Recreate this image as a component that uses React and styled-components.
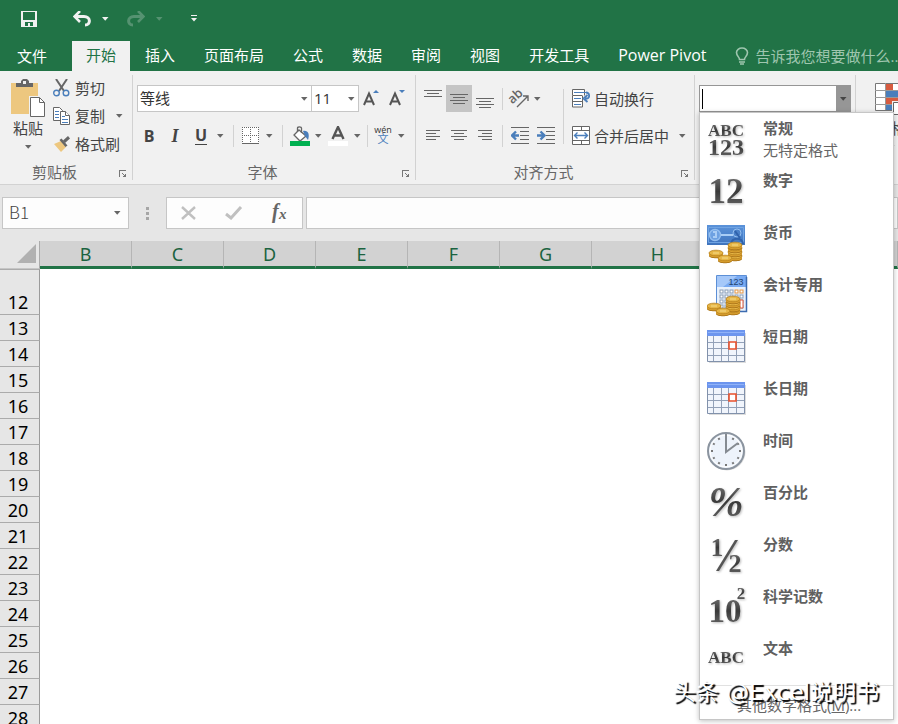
import React, { useState } from 'react';
import styled, { createGlobalStyle, css } from 'styled-components';

const GlobalStyle = createGlobalStyle`
    *, *::before, *::after {
        box-sizing: border-box;
    }
    body {
        margin: 0;
        font-family: "Open Sans", "Noto Sans CJK SC", sans-serif;
        font-size: 15px;
        line-height: 22px;
        color: #444;
        background: #fff;
    }
    button, input, select {
        font: inherit;
        color: inherit;
        margin: 0;
        padding: 0;
        border: 0;
        border-radius: 0;
        background: transparent;
        outline: none;
    }
    svg {
        display: block;
        flex: none;
    }
`;

const Window = styled.div`
    position: relative;
    display: flex;
    flex-direction: column;
    height: 100vh;
    overflow: hidden;
`;

const TitleBar = styled.header`
    display: flex;
    flex: none;
    align-items: center;
    height: 41px;
    padding: 0 16px 3px;
    background: #217346;
    color: #f1f1f1;
`;

const QuickButton = styled.button`
    display: flex;
    align-items: center;
    justify-content: center;
    width: ${props => props.$width || 26}px;
    height: 26px;
    margin-left: ${props => props.$gap || 0}px;
    opacity: ${props => props.disabled ? 0.25 : 1};
`;

const TabStrip = styled.nav`
    display: flex;
    flex: none;
    gap: 1px;
    height: 30px;
    background: #217346;
    overflow: hidden;
`;

const Tab = styled.button`
    flex: none;
    padding: 0 14px 3px;
    font-size: ${props => props.$latin ? 16 : 15}px;
    white-space: nowrap;
    color: ${props => props.$active ? "#217346" : "#fff"};
    background: ${props => props.$active ? "#f1f1f1" : "transparent"};
`;

const FileTab = styled(Tab)`
    padding: 0 24px 0 17px;
`;

const TellMe = styled.button`
    display: flex;
    flex: none;
    align-items: center;
    gap: 6px;
    padding-left: 14px;
    white-space: nowrap;
    color: #9fc6af;
`;

const Ribbon = styled.section`
    display: flex;
    flex: none;
    height: 114px;
    background: #f1f1f1;
    border-bottom: 1px solid #d2d2d2;
`;

const Group = styled.div`
    display: flex;
    flex: none;
    flex-direction: column;
    width: ${props => props.$width}px;
    background: linear-gradient(#d2d2d2, #d2d2d2) right 0 top 4px / 1px 105px no-repeat;
`;

const GroupBody = styled.div`
    display: flex;
    flex: 1;
    padding: ${props => props.$pad || "14px 0 0 4px"};
`;

const GroupFooter = styled.div`
    display: flex;
    align-items: center;
    height: 24px;
    color: #666;
`;

const GroupName = styled.span`
    flex: 1;
    text-align: center;
`;

const Launcher = styled.button`
    display: flex;
    align-items: center;
    width: 24px;
    height: 16px;
    padding: 4px 0 0 10px;
`;

const Stack = styled.div`
    display: flex;
    flex-direction: column;
    gap: ${props => props.$gap || 0}px;
`;

const ToolRow = styled.div`
    display: flex;
    align-items: center;
    height: 27px;
`;

const Tool = styled.button`
    display: flex;
    align-items: center;
    justify-content: center;
    width: ${props => props.$width || 26}px;
    height: 27px;
    background: ${props => props.$pressed ? "#c5c5c5" : "transparent"};
`;

const BigTool = styled.button`
    display: flex;
    flex: none;
    flex-direction: column;
    align-items: center;
    width: ${props => props.$width}px;
    padding-top: ${props => props.$top || 0}px;
    color: #444;

    svg:last-child {
        margin-top: 6px;
    }
`;

const LabelTool = styled.button`
    display: flex;
    align-items: center;
    gap: ${props => props.$gap || 4}px;
    height: ${props => props.$tall ? 28 : 27}px;
    white-space: nowrap;

    svg:last-child {
        margin-left: 3px;
    }
`;

const Letter = styled.span`
    font-size: 16px;
    font-weight: 700;
    color: #444;
    ${props => props.$italic && css`
        font-family: "Liberation Serif", serif;
        font-size: 18px;
        font-style: italic;
    `}
    ${props => props.$underline && css`
        line-height: 17px;
        border-bottom: 1px solid #444;
    `}
`;

const Divider = styled.span`
    flex: none;
    width: 1px;
    height: 22px;
    margin: 0 ${props => props.$space || 6}px;
    background: #d2d2d2;
`;

const TallDivider = styled(Divider)`
    height: 55px;
    margin: 4px 8px 0 4px;
`;

const SelectBox = styled.label`
    display: grid;
    align-items: center;
    width: ${props => props.$width}px;
    height: 27px;
    margin-right: -1px;
    border: 1px solid #c6c6c6;
    background: #fff;

    > * {
        grid-area: 1 / 1;
    }
    > svg {
        justify-self: end;
        margin-right: 1px;
        pointer-events: none;
    }
`;

const Select = styled.select`
    appearance: none;
    width: 100%;
    height: 25px;
    padding: 0 0 2px 2px;
    color: #333;
`;

const FormatBox = styled.div`
    position: relative;
    display: flex;
    width: 152px;
    height: 27px;
    border: 1px solid #969696;
    background: #fff;
`;

const FormatInput = styled.input`
    flex: 1;
    min-width: 0;
    padding-left: 3px;
    caret-color: transparent;
`;

const Caret = styled.span`
    width: 1px;
    height: 20px;
    margin: 3px 0 0 2px;
    background: #000;
`;

const FormatArrow = styled.button`
    display: flex;
    align-items: center;
    justify-content: center;
    width: 14px;
    background: #969696;
`;

const Menu = styled.ul`
    position: absolute;
    top: 26px;
    left: -1px;
    z-index: 2;
    width: 195px;
    margin: 0;
    padding: 0;
    list-style: none;
    background: #fff;
    border: 1px solid #c6c6c6;
    box-shadow: 0 1px 5px rgba(0, 0, 0, 0.25);
`;

const MenuItem = styled.button`
    display: flex;
    width: 100%;
    height: 52px;
    gap: 15px;
    padding: 4px 7px;
    text-align: left;

    svg {
        margin-top: 2px;
    }
`;

const ItemTitle = styled.span`
    display: block;
    font-weight: 600;
    color: #606060;
`;

const ItemHint = styled.span`
    display: block;
    color: #666;
`;

const MoreItem = styled.button`
    width: 100%;
    height: 34px;
    padding: 4px 0 0 37px;
    text-align: left;
    color: #666;
    border-top: 1px solid #e1e1e1;
`;

const FormulaRow = styled.section`
    display: flex;
    flex: none;
    align-items: center;
    height: 56px;
    padding-left: 2px;
    background: #e6e6e6;
`;

const Field = styled.div`
    display: flex;
    align-items: center;
    height: 32px;
    width: ${props => props.$width}px;
    background: #fdfdfd;
    border: 1px solid #c6c6c6;
`;

const NameInput = styled.input`
    flex: 1;
    min-width: 0;
    padding: 0 0 2px 6px;
    font-family: "Noto Sans CJK SC", sans-serif;
    font-size: 17px;
    font-weight: 300;
`;

const Grip = styled.span`
    display: flex;
    justify-content: center;
    width: 37px;
`;

const FormulaInput = styled.input`
    flex: 1;
    min-width: 0;
    height: 32px;
    margin-left: 3px;
    padding: 0 6px;
    background: #fdfdfd;
    border: 1px solid #c6c6c6;
`;

const Sheet = styled.table`
    flex: none;
    width: 100%;
    table-layout: fixed;
    border-collapse: separate;
    border-spacing: 0;
    font-family: "Noto Sans", "Noto Sans CJK SC", sans-serif;
    font-size: 18px;
    line-height: 24px;

    th {
        padding: 0;
        font-weight: 400;
    }
`;

const Corner = styled.td`
    height: 28px;
    padding: 0 3px 2px 0;
    background: #e6e6e6;
    border-right: 1px solid #ababab;
    border-bottom: 1px solid #c6c6c6;

    svg {
        margin-left: auto;
    }
`;

const ColumnHead = styled.th`
    height: 28px;
    color: #1b6340;
    background: #d2d2d2;
    border-right: 1px solid #b5b5b5;
    border-bottom: 3px solid #217346;
`;

const RowHead = styled.th`
    height: ${props => props.$tall ? 46 : 26}px;
    padding-right: 3px !important;
    vertical-align: bottom;
    color: #000;
    background: #e6e6e6;
    border-top: ${props => props.$tall ? "1px solid #ababab" : 0};
    border-right: 1px solid #9b9b9b;
    border-bottom: 1px solid #ababab;
`;

const Cell = styled.td`
    padding: 0;
    background: #fff;
`;

const Stamp = styled.div`
    position: absolute;
    right: 19px;
    bottom: 17px;
    z-index: 3;
    font-family: "DejaVu Sans", "Noto Sans CJK SC", sans-serif;
    font-size: 23px;
    line-height: 30px;
    white-space: nowrap;
    color: #fff;
    text-shadow: 2px 2px 1px #000;
    pointer-events: none;
`;

const Arrow = ({ color = "#666" }) => (
    <svg width="12" height="4" viewBox="0 0 12 4"><path d="M3 0h6.500L6.200 3.700z" fill={color} /></svg>
);

const SaveIcon = () => (
    <svg width="16" height="16" viewBox="0 0 16 16" fill="none" shapeRendering="crispEdges">
        <path d="M0 0h16v16H0z" fill="#f1f1f1" />
        <path d="M2 1h12v8H2zM4 11h8v4H9v-3H7v3H4z" fill="#217346" />
        <path d="M7 12h2v3H7z" fill="#f1f1f1" />
    </svg>
);

const UndoIcon = ({ flip }) => (
    <svg width="18" height="16" viewBox="0 0 18 16" fill="none" stroke="#f1f1f1" strokeWidth="3"
        transform={flip ? "scale(-1 1)" : undefined}>
        <path d="M2 5.500h9c7 0 7 8.500 1 8.500" />
        <path d="M7 0L1.500 5.500 7 11" strokeWidth="2.600" />
    </svg>
);

const CustomizeIcon = () => (
    <svg width="8" height="8" viewBox="0 0 8 8" fill="#f1f1f1"><path d="M1 0h6v1H1zM1 3h6L4 6.500z" /></svg>
);

const BulbIcon = () => (
    <svg width="14" height="18" viewBox="0 0 14 18" fill="none" stroke="#9fc6af" strokeWidth="1.600">
        <path d="M4.500 12.500c0-2.500-3-3.500-3-7C1.500 3 4 1 7 1s5.500 2 5.500 4.500c0 3.500-3 4.500-3 7z" />
        <path d="M4 15h6M5 17h4" />
    </svg>
);

const PasteIcon = () => (
    <svg width="34" height="38" viewBox="0 0 34 38">
        <path d="M0 4h27v31H0z" fill="#edc77f" />
        <path d="M5 4h5V2l2-2h4l2 2v2h4v4H5z" fill="#666" />
        <path d="M12 2h3v3h-3z" fill="#f1f1f1" />
        <path d="M18 17h17v23H18z" fill="#f1f1f1" />
        <path d="M19.500 18.500h9l5 5v14h-14z" fill="#fff" stroke="#666" />
        <path d="M28.500 18.500v5h5" fill="none" stroke="#666" />
    </svg>
);

const CutIcon = () => (
    <svg width="17" height="18" viewBox="0 0 17 18" fill="none">
        <path d="M3 0l8 12M14 0L6 12" stroke="#666" strokeWidth="2" />
        <circle cx="3.500" cy="14" r="2.800" stroke="#4a7ebb" strokeWidth="1.400" />
        <circle cx="13" cy="14" r="2.800" stroke="#4a7ebb" strokeWidth="1.400" />
    </svg>
);

const CopyIcon = () => (
    <svg width="17" height="18" viewBox="0 0 17 18" fill="#fff" stroke="#666">
        <path d="M.5.5h6l3 3v10h-9z" />
        <path d="M2 4.500h4M2 7.500h4M2 10.500h4" stroke="#4a7ebb" />
        <path d="M7.500 4.500h5l4 4v9h-9z" />
        <path d="M12.500 4.500v4h4" />
        <path d="M9 9.500h3M9 12.500h6M9 15.500h6" stroke="#4a7ebb" />
    </svg>
);

const BrushIcon = () => (
    <svg width="17" height="16" viewBox="0 0 17 16">
        <path d="M1 8l7-3 5 6-5 5z" fill="#edc77f" />
        <path d="M6.500 4l2-1.500 6 7-2 1.500z" fill="#666" />
        <path d="M10 4.500L15 0l2 2.500-5 4.500z" fill="#666" />
    </svg>
);

const LauncherIcon = () => (
    <svg width="8" height="8" viewBox="0 0 8 8" fill="none" stroke="#777" shapeRendering="crispEdges">
        <path d="M.5 7V.5H7" />
        <path d="M3 3l3 3" />
        <path d="M7 3v4H3l4-4z" fill="#777" stroke="none" />
    </svg>
);

const GrowIcon = ({ down }) => (
    <svg width="18" height="20" viewBox="0 0 18 20" fill="none">
        <path d="M2 16L7 4.500 12 16M4 12.500h6" stroke="#555" strokeWidth="2" />
        <path d={down ? "M11 1h6l-3 3z" : "M11 4h6l-3-3z"} fill="#4a7ebb" />
    </svg>
);

const BordersIcon = () => (
    <svg width="18" height="18" viewBox="0 0 18 18" fill="none" stroke="#666">
        <path d="M0 0h17v16H0z" fill="#fff" stroke="none" />
        <path d="M0 .5h17M.5 0v17M16.500 0v17M8.500 0v17M0 8.500h17" strokeDasharray="1 1" />
        <path d="M0 16.500h17" />
    </svg>
);

const FillIcon = () => (
    <svg width="20" height="20" viewBox="0 0 20 20" fill="none">
        <path d="M9 4l7 6-6 5-6-6z" fill="#fff" stroke="#666" strokeWidth="1.300" />
        <path d="M7.500 6V2c0-1.500 4-1.500 4 0v5" stroke="#666" strokeWidth="1.300" />
        <path d="M13 5c5-1 7 3 5 9l-3-4z" fill="#4a7ebb" />
        <path d="M0 15h20v5H0z" fill="#00b050" />
    </svg>
);

const FontColorIcon = () => (
    <svg width="20" height="20" viewBox="0 0 20 20" fill="none">
        <path d="M4.500 13L10 1l5.500 12M6.500 9.500h7" stroke="#555" strokeWidth="2.400" />
        <path d="M0 15h20v5H0z" fill="#fff" />
    </svg>
);

const PhoneticIcon = () => (
    <svg width="22" height="26" viewBox="0 0 22 26" overflow="visible">
        <text x="11" y="10" textAnchor="middle" fontFamily="Open Sans" fontSize="9" fill="#333">wén</text>
        <text x="11" y="20" textAnchor="middle" fontFamily="Noto Sans CJK SC" fontSize="11" fill="#4a7ebb">文</text>
    </svg>
);

// each entry is [start, length] of a horizontal stroke, three pixels apart
const Lines = ({ rows, top = 0 }) => (
    <svg width="18" height="18" viewBox="0 0 18 18" shapeRendering="crispEdges">
        {rows.map(([x, w], i) => <rect key={i} x={x} y={top + i * 3} width={w} height="1" fill="#666" />)}
    </svg>
);

const IndentIcon = ({ right }) => (
    <svg width="18" height="17" viewBox="0 0 18 17" fill="none" stroke="#666">
        <path d="M0 .5h18M9 4.500h9M9 8.500h9M9 12.500h9M0 16.500h18" />
        <path d={right ? "M0 8.500h6M3.500 4.500l4 4-4 4" : "M2 8.500h6M5 4.500l-4 4 4 4"} stroke="#4a7ebb" strokeWidth="2.400" />
    </svg>
);

const OrientationIcon = () => (
    <svg width="22" height="20" viewBox="0 0 22 20" overflow="visible">
        <text transform="rotate(-42 8 8)" x="8" y="11" textAnchor="middle" fontFamily="Open Sans" fontSize="13" fontWeight="600" fill="#666">ab</text>
        <path d="M9 18L19.500 7.500M15 7h5v5" fill="none" stroke="#666" strokeWidth="1.400" />
    </svg>
);

const WrapIcon = () => (
    <svg width="18" height="19" viewBox="0 0 18 19" fill="none" stroke="#666">
        <path d="M.5 6.500v-6h12v6M.5 6.500h10M.5 7v11h10V7M.5 12.500h10" fill="#fff" />
        <path d="M2 3.500h12M2 9.500h7M2 15.500h7" stroke="#4a7ebb" />
        <path d="M14 3.500c4 0 4 6 1 6h-2M15.500 6l-4 3.500 4 3.500" stroke="#4a7ebb" strokeWidth="1.800" />
    </svg>
);

const MergeIcon = () => (
    <svg width="18" height="19" viewBox="0 0 18 19" fill="none" stroke="#666">
        <path d="M.5.5h17v18H.5z" fill="#fff" />
        <path d="M0 4.500h18M0 14.500h18M9.500 0v4M9.500 15v4" />
        <path d="M3 9.500h12M5.500 6.500l-3 3 3 3M12.500 6.500l3 3-3 3" stroke="#4a7ebb" strokeWidth="1.400" />
    </svg>
);

const ConditionalIcon = () => (
    <svg width="32" height="34" viewBox="0 0 32 34" fill="none">
        <path d="M.5.5h31v27H.5z" fill="#fff" stroke="#777" />
        <path d="M11 1h7v6h-7zM11 15h13v6H11z" fill="#d75b3f" />
        <path d="M11 8h13v6H11zM11 22h7v5h-7z" fill="#4a7ebb" />
        <path d="M0 7.500h31M0 14.500h31M0 21.500h31M10.500 0v27" stroke="#999" />
        <path d="M17 18h15v14H17z" fill="#f1f1f1" />
        <path d="M18.500 19.500h13v12h-13z" fill="#fff" stroke="#666" />
    </svg>
);

const SelectAllIcon = () => (
    <svg width="19" height="19" viewBox="0 0 19 19"><path d="M19 0v19H0z" fill="#b1b1b1" /></svg>
);

const CancelIcon = () => (
    <svg width="16" height="14" viewBox="0 0 16 14" stroke="#c0c0c0" strokeWidth="2.400"><path d="M1 1l13 12M14 1L1 13" /></svg>
);

const EnterIcon = () => (
    <svg width="18" height="14" viewBox="0 0 18 14" fill="none" stroke="#c0c0c0" strokeWidth="3"><path d="M1 8l5 4L16 1" /></svg>
);

const FxIcon = () => (
    <svg width="20" height="22" viewBox="0 0 20 22" fontFamily="Liberation Serif" fontStyle="italic" fontWeight="700" fill="#666">
        <text x="3" y="16" fontSize="20">f</text>
        <text x="10" y="17" fontSize="15">x</text>
    </svg>
);

const GripIcon = () => (
    <svg width="3" height="13" viewBox="0 0 3 13" fill="#a6a6a6"><path d="M0 0h3v3H0zM0 5h3v3H0zM0 10h3v3H0z" /></svg>
);

// glyph style icons of the number format list: [text, x, y, size]
const glyphs = {
    general: [["ABC", 19, 17, 17], ["123", 19, 36, 24]],
    number: [["12", 19, 32, 35]],
    percent: [["%", 19, 33, 42]],
    fraction: [["1", 10, 21, 25], ["2", 28, 37, 26]],
    scientific: [["10", 18, 35, 33], ["2", 34, 12, 17]],
    text: [["ABC", 19, 24, 17]],
};

const GlyphIcon = ({ kind }) => (
    <svg width="41" height="42" viewBox="0 0 41 42" overflow="visible">
        <defs>
            <linearGradient id={"shade-" + kind} x1="0" y1="0" x2="0" y2="1">
                <stop offset="0" stopColor="#808080" />
                <stop offset="0.500" stopColor="#3a3a3a" />
                <stop offset="1" stopColor="#707070" />
            </linearGradient>
        </defs>
        <g style={{ filter: "drop-shadow(1px 1px 1px #bbb)" }} fontFamily="Liberation Serif" fontWeight="700"
            fontStyle={kind === "percent" ? "italic" : "normal"} textAnchor="middle" fill={"url(#shade-" + kind + ")"}>
            {glyphs[kind].map(([text, x, y, size], i) => <text key={i} x={x} y={y} fontSize={size}>{text}</text>)}
            {kind === "fraction" && <path d="M28 5h3L12 36H9z" fill="#555" />}
        </g>
    </svg>
);

const Coin = ({ x, y }) => (
    <g transform={`translate(${x} ${y})`}>
        <path d="M0 3v3c0 3 14 3 14 0V3z" fill="#b07a1c" />
        <path d="M0 3v2c0 3 14 3 14 0V3z" fill="#d9a02f" />
        <ellipse cx="7" cy="3" rx="7" ry="2.800" fill="#e6b647" stroke="#b9811d" strokeWidth="0.800" />
        <path d="M4 3h6" stroke="#f6dc8c" />
    </g>
);

const CurrencyIcon = () => (
    <svg width="41" height="42" viewBox="0 0 41 42">
        <defs>
            <linearGradient id="note" x1="0" y1="0" x2="0" y2="1">
                <stop offset="0" stopColor="#5b93da" /><stop offset="1" stopColor="#3f74bd" />
            </linearGradient>
        </defs>
        <path d="M0 2h38v20H0z" fill="url(#note)" />
        <path d="M1.500 4.500h35v15h-35z" fill="none" stroke="#6fa3e2" />
        <circle cx="8" cy="12" r="5.500" fill="#6da1e2" stroke="#94bff0" strokeWidth="1.400" />
        <path d="M6 9h3v5H6M14 12h12" fill="none" stroke="#a9cdf5" strokeWidth="2" />
        <circle cx="30" cy="10" r="4" fill="#4a80c8" stroke="#94bff0" />
        <path d="M24 21c1-7 11-7 12 0M28 8l5 7" fill="none" stroke="#2f62ac" strokeWidth="2" />
        <Coin x="21" y="30" /><Coin x="21" y="26" /><Coin x="21" y="22" /><Coin x="21" y="19" />
        <Coin x="2" y="27" /><Coin x="11" y="32" />
    </svg>
);

const AccountingIcon = () => (
    <svg width="41" height="42" viewBox="0 0 41 42">
        <path d="M9.500.5h30v36h-30z" fill="#e8f1fc" stroke="#5c8fd6" />
        <path d="M10 1h29v11H10z" fill="#79aaf2" />
        <path d="M10 1h20L16 12h-6z" fill="#a5c8f9" />
        <text x="29" y="10" textAnchor="middle" fontFamily="Liberation Sans" fontSize="9" fill="#24446f">123</text>
        {[15, 20, 25, 30].map(y => [12, 17, 22, 27, 32].map(x => (
            <rect key={x + "-" + y} x={x + 1} y={y} width="3" height="3" fill="#fff" stroke={y < 20 && x > 25 ? "#e59643" : "#8a9db5"} />
        )))}
        <path d="M33 25h3v8h-3z" fill="#fff" stroke="#dc5a3c" />
        <path d="M13 36.500h26.500V2" fill="none" stroke="#3c6bb0" strokeWidth="1.500" />
        <Coin x="19" y="32" /><Coin x="19" y="29" /><Coin x="19" y="25" /><Coin x="19" y="21" />
        <Coin x="0" y="28" /><Coin x="9" y="33" />
    </svg>
);

const CalendarIcon = () => (
    <svg width="41" height="42" viewBox="0 0 41 42">
        <path d="M2 6h37v30H2z" fill="#ddd" />
        <path d="M.5 4.500h37v30H.5z" fill="#f1f5fc" stroke="#8191ab" />
        <path d="M0 3h38v6H0z" fill="#6c95ee" />
        <path d="M1 5h36v1H1z" fill="#8fb2f8" />
        <path d="M6.500 9v25M14.500 9v25M21.500 9v25M29.500 9v25M1 15.500h36M1 21.500h36M1 28.500h36" stroke="#93a1b8" />
        <path d="M22 15h7v7h-7z" fill="#fff" stroke="#e8502c" strokeWidth="1.600" />
    </svg>
);

const ClockIcon = () => (
    <svg width="41" height="42" viewBox="0 0 41 42" fill="none">
        <circle cx="20" cy="21" r="18.500" fill="#ddd" />
        <circle cx="19" cy="20" r="18" fill="#edf3fb" stroke="#8b949f" strokeWidth="2" />
        <circle cx="19" cy="20" r="16" stroke="#fff" />
        {[30, 60, 90, 120, 150, 180, 210, 240, 270, 300, 330].map(a => (
            <rect key={a} x="18" y="5" width="2" height="2" fill="#777" transform={`rotate(${a} 19 20)`} />
        ))}
        <path d="M19 3v18L31 12" stroke="#858b92" strokeWidth="2" />
    </svg>
);

const formats = [
    { name: "常规", hint: "无特定格式", icon: <GlyphIcon kind="general" /> },
    { name: "数字", icon: <GlyphIcon kind="number" /> },
    { name: "货币", icon: <CurrencyIcon /> },
    { name: "会计专用", icon: <AccountingIcon /> },
    { name: "短日期", icon: <CalendarIcon /> },
    { name: "长日期", icon: <CalendarIcon /> },
    { name: "时间", icon: <ClockIcon /> },
    { name: "百分比", icon: <GlyphIcon kind="percent" /> },
    { name: "分数", icon: <GlyphIcon kind="fraction" /> },
    { name: "科学记数", icon: <GlyphIcon kind="scientific" /> },
    { name: "文本", icon: <GlyphIcon kind="text" /> },
];

const tabs = ["开始", "插入", "页面布局", "公式", "数据", "审阅", "视图", "开发工具", "Power Pivot"];
const columns = ["B", "C", "D", "E", "F", "G", "H", "I"];
const columnWidths = [92, 92, 92, 92, 92, 92, 132];
const rows = Array.from({ length: 17 }, (_, i) => i + 12);

function Footer({ name }) {
    return (
        <GroupFooter>
            <GroupName>{name}</GroupName>
            <Launcher aria-label={name}><LauncherIcon /></Launcher>
        </GroupFooter>
    );
}

function ClipboardGroup() {
    return (
        <Group $width={133}>
            <GroupBody $pad="3px 0 0 3px">
                <BigTool $width={50} $top={5}>
                    <PasteIcon />
                    <span>粘贴</span>
                    <Arrow />
                </BigTool>
                <Stack>
                    <LabelTool $tall $gap={5}><CutIcon /><span>剪切</span></LabelTool>
                    <LabelTool $tall $gap={5}><CopyIcon /><span>复制</span><Arrow /></LabelTool>
                    <LabelTool $tall $gap={5}><BrushIcon /><span>格式刷</span></LabelTool>
                </Stack>
            </GroupBody>
            <Footer name="剪贴板" />
        </Group>
    );
}

function FontGroup() {
    return (
        <Group $width={283}>
            <GroupBody>
                <Stack $gap={10}>
                    <ToolRow>
                        <SelectBox $width={175}>
                            <Select aria-label="字体"><option>等线</option></Select>
                            <Arrow />
                        </SelectBox>
                        <SelectBox $width={48}>
                            <Select aria-label="字号"><option>11</option></Select>
                            <Arrow />
                        </SelectBox>
                        <Tool aria-label="增大字号"><GrowIcon /></Tool>
                        <Tool aria-label="减小字号"><GrowIcon down /></Tool>
                    </ToolRow>
                    <ToolRow>
                        <Tool $width={24}><Letter>B</Letter></Tool>
                        <Tool $width={28}><Letter $italic>I</Letter></Tool>
                        <Tool $width={24}><Letter $underline>U</Letter></Tool>
                        <Tool $width={14} aria-label="下划线"><Arrow /></Tool>
                        <Divider />
                        <Tool $width={22} aria-label="边框"><BordersIcon /></Tool>
                        <Tool $width={14} aria-label="边框选项"><Arrow /></Tool>
                        <Divider />
                        <Tool $width={22} aria-label="填充颜色"><FillIcon /></Tool>
                        <Tool $width={14} aria-label="填充颜色选项"><Arrow /></Tool>
                        <Tool $width={26} aria-label="字体颜色"><FontColorIcon /></Tool>
                        <Tool $width={12} aria-label="字体颜色选项"><Arrow /></Tool>
                        <Divider $space={4} />
                        <Tool $width={22} aria-label="拼音"><PhoneticIcon /></Tool>
                        <Tool $width={14} aria-label="拼音选项"><Arrow /></Tool>
                    </ToolRow>
                </Stack>
            </GroupBody>
            <Footer name="字体" />
        </Group>
    );
}

function AlignGroup() {
    return (
        <Group $width={279}>
            <GroupBody>
                <Stack $gap={10}>
                    <ToolRow>
                        <Tool aria-label="顶端对齐"><Lines rows={[[0, 18], [3, 12], [0, 18]]} /></Tool>
                        <Tool aria-label="垂直居中" $pressed><Lines top={4} rows={[[0, 18], [3, 12], [0, 18], [3, 12]]} /></Tool>
                        <Tool aria-label="底端对齐"><Lines top={8} rows={[[0, 18], [3, 12], [0, 18], [3, 12]]} /></Tool>
                        <Divider $space={4} />
                        <Tool $width={24} aria-label="方向"><OrientationIcon /></Tool>
                        <Tool $width={12} aria-label="方向选项"><Arrow /></Tool>
                    </ToolRow>
                    <ToolRow>
                        <Tool aria-label="左对齐"><Lines top={3} rows={[[2, 14], [2, 10], [2, 14], [2, 10]]} /></Tool>
                        <Tool aria-label="居中"><Lines top={3} rows={[[1, 16], [4, 10], [1, 16], [4, 10]]} /></Tool>
                        <Tool aria-label="右对齐"><Lines top={3} rows={[[2, 14], [6, 10], [2, 14], [6, 10]]} /></Tool>
                        <Divider $space={4} />
                        <Tool aria-label="减少缩进量"><IndentIcon /></Tool>
                        <Tool aria-label="增加缩进量"><IndentIcon right /></Tool>
                    </ToolRow>
                </Stack>
                <TallDivider />
                <Stack $gap={10}>
                    <LabelTool><WrapIcon /><span>自动换行</span></LabelTool>
                    <LabelTool><MergeIcon /><span>合并后居中</span><Arrow /></LabelTool>
                </Stack>
            </GroupBody>
            <Footer name="对齐方式" />
        </Group>
    );
}

function NumberGroup() {
    const [value, setValue] = useState("");

    return (
        <Group $width={161}>
            <GroupBody>
                <FormatBox>
                    <Caret />
                    <FormatInput aria-label="数字格式" value={value} onChange={e => setValue(e.target.value)} />
                    <FormatArrow aria-label="展开"><Arrow color="#444" /></FormatArrow>
                    <Menu>
                        {formats.map(({ name, hint, icon }) => (
                            <li key={name}>
                                <MenuItem onClick={() => setValue(name)}>
                                    {icon}
                                    <span>
                                        <ItemTitle>{name}</ItemTitle>
                                        {hint && <ItemHint>{hint}</ItemHint>}
                                    </span>
                                </MenuItem>
                            </li>
                        ))}
                        <li><MoreItem>其他数字格式(<u>M</u>)...</MoreItem></li>
                    </Menu>
                </FormatBox>
            </GroupBody>
        </Group>
    );
}

function App() {
    const [active, setActive] = useState("开始");

    return (
        <Window>
            <GlobalStyle />
            <TitleBar>
                <QuickButton aria-label="保存"><SaveIcon /></QuickButton>
                <QuickButton $gap={27} aria-label="撤消"><UndoIcon /></QuickButton>
                <QuickButton $width={20} aria-label="撤消选项"><Arrow color="#f1f1f1" /></QuickButton>
                <QuickButton $gap={8} disabled aria-label="恢复"><UndoIcon flip /></QuickButton>
                <QuickButton $width={20} disabled aria-label="恢复选项"><Arrow color="#f1f1f1" /></QuickButton>
                <QuickButton $gap={12} aria-label="自定义"><CustomizeIcon /></QuickButton>
            </TitleBar>
            <TabStrip>
                <FileTab>文件</FileTab>
                {tabs.map(tab => (
                    <Tab key={tab} $active={tab === active} $latin={tab === "Power Pivot"} onClick={() => setActive(tab)}>{tab}</Tab>
                ))}
                <TellMe><BulbIcon />告诉我您想要做什么...</TellMe>
            </TabStrip>
            <Ribbon>
                <ClipboardGroup />
                <FontGroup />
                <AlignGroup />
                <NumberGroup />
                <GroupBody $pad="12px 0 0 5px">
                    <BigTool $width={60}>
                        <ConditionalIcon />
                        <span>条件格式</span>
                        <Arrow />
                    </BigTool>
                </GroupBody>
            </Ribbon>
            <FormulaRow>
                <Field $width={127}>
                    <NameInput aria-label="名称框" defaultValue="B1" />
                    <Tool $width={22} aria-label="名称列表"><Arrow /></Tool>
                </Field>
                <Grip><GripIcon /></Grip>
                <Field $width={137}>
                    <Tool $width={44} aria-label="取消"><CancelIcon /></Tool>
                    <Tool $width={46} aria-label="输入"><EnterIcon /></Tool>
                    <Tool $width={44} aria-label="插入函数"><FxIcon /></Tool>
                </Field>
                <FormulaInput aria-label="编辑栏" />
            </FormulaRow>
            <Sheet>
                <colgroup>
                    <col width="40" />
                    {columnWidths.map((width, i) => <col key={i} width={width} />)}
                    <col />
                </colgroup>
                <thead>
                    <tr>
                        <Corner><SelectAllIcon /></Corner>
                        {columns.map(column => <ColumnHead key={column} scope="col">{column}</ColumnHead>)}
                    </tr>
                </thead>
                <tbody>
                    {rows.map(row => (
                        <tr key={row}>
                            <RowHead scope="row" $tall={row === 12}>{row}</RowHead>
                            {columns.map(column => <Cell key={column} />)}
                        </tr>
                    ))}
                </tbody>
            </Sheet>
            <Stamp>头条 @Excel说明书</Stamp>
        </Window>
    );
}

export default App;
